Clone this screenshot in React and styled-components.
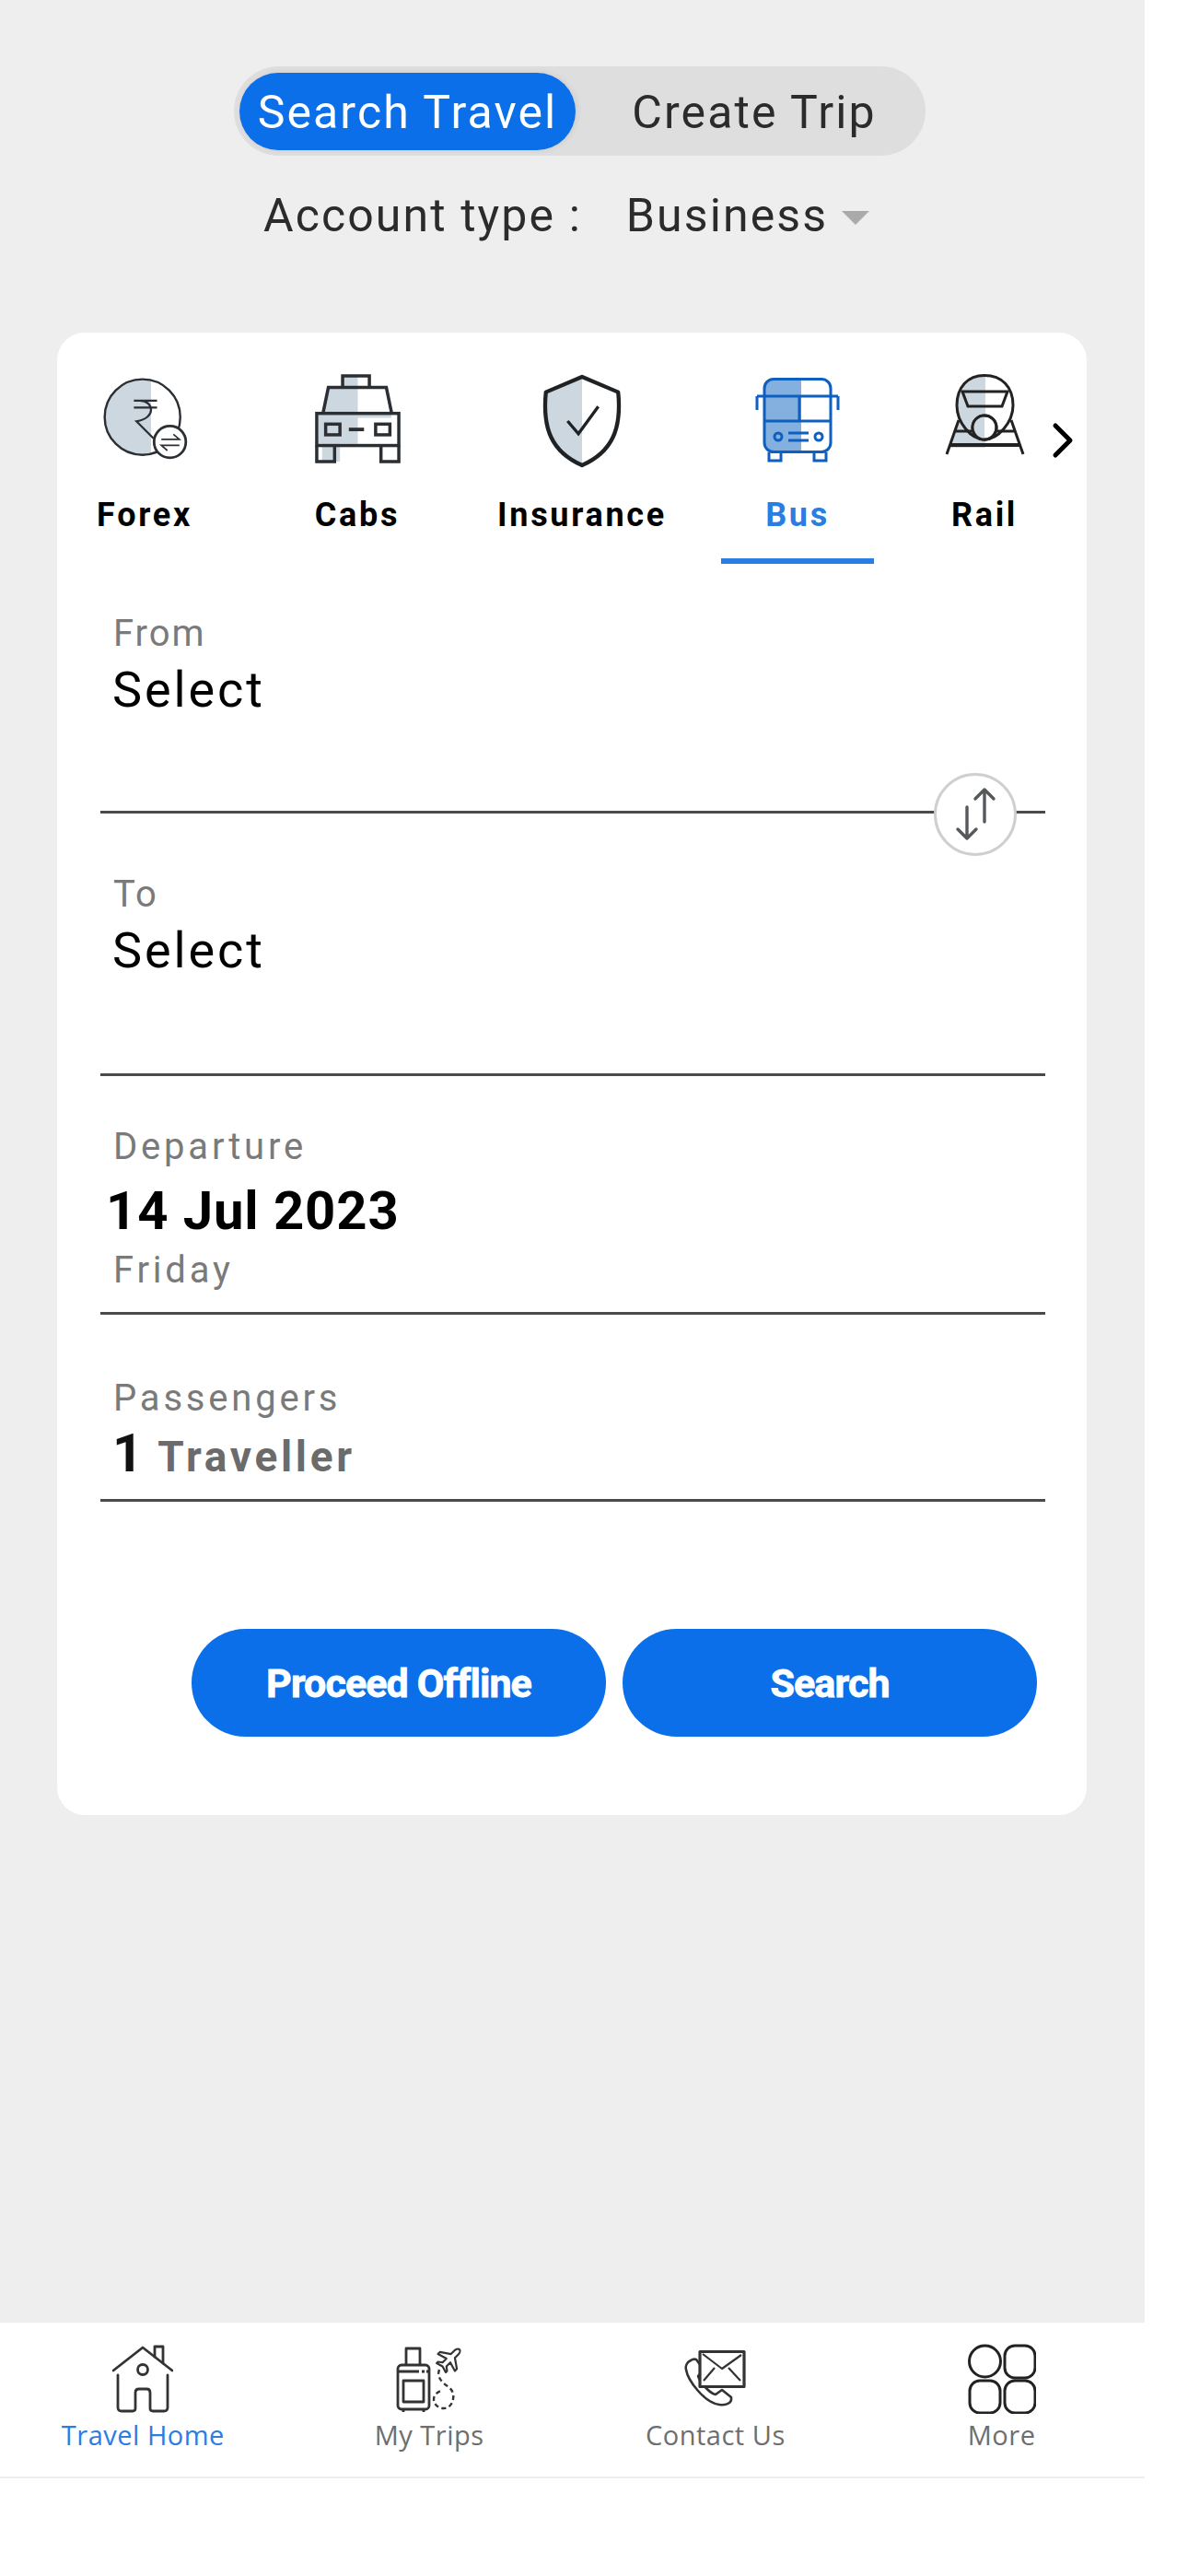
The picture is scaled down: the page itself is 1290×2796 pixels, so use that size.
import React from "react";
import styled, { createGlobalStyle } from "styled-components";

const Global = createGlobalStyle`
  html, body { margin: 0; padding: 0; background: #fff; }
  body { font-family: Roboto, "Liberation Sans", sans-serif; }
`;

const Page = styled.div`width: 1243px; height: 2796px; display: flex; flex-direction: column;`;
const Main = styled.main`height: 2521px; background: #eeeeee; padding: 72px 63px 0 62px; box-sizing: border-box; display: flex; flex-direction: column; align-items: center;`;
const Toggle = styled.div`
  width: 751px; height: 97px; margin-left: 17px; box-sizing: border-box; padding: 7px 6px; border-radius: 49px; background: #dedede;
  display: flex; align-items: center;
`;
const ToggleOption = styled.div`
  height: 84px; box-sizing: border-box; padding-top: 2px; border-radius: 42px; display: flex; align-items: center; justify-content: center; white-space: nowrap;
  width: ${p => p.$w}px; margin-left: ${p => p.$ml || 0}px;
  font-size: 50px; letter-spacing: 2.1px; font-weight: 400;
  background: ${p => p.$active ? "#0a6fe9" : "transparent"};
  color: ${p => p.$active ? "#fff" : "#2b2b2b"};
  box-shadow: ${p => p.$active ? "2px 0 6px rgba(0,0,0,.08)" : "none"};
`;
const AccountRow = styled.div`margin-top: 36px; height: 58px; display: flex; align-items: center; font-size: 50px; letter-spacing: 2.1px; color: #2b2b2b; margin-left: -12px;`;
const AccountValue = styled.span`margin-left: 48px;`;
const Caret = styled.span`width: 0; height: 0; margin-left: 15px; margin-top: 4px; border-left: 15px solid transparent; border-right: 15px solid transparent; border-top: 15px solid #aaa;`;

const Card = styled.section`
  margin-top: 98px; width: 1118px; height: 1609px; background: #fff; border-radius: 30px; box-sizing: border-box; padding: 45px 45px 0 47px; align-self: flex-start;
  display: flex; flex-direction: column;
`;
const Tabs = styled.nav`position: relative; display: flex; height: 202px; margin: 0 -45px 0 -47px;`;
const Tab = styled.div`
  position: absolute; left: ${p => p.$cx}px; top: 0; transform: translateX(-50%);
  display: flex; flex-direction: column; align-items: center; white-space: nowrap;
  width: ${p => p.$w}px; height: 200px;
  color: ${p => p.$active ? "#2a7de1" : "#000"};
  border-bottom: ${p => p.$active ? "6px solid #2a7de1" : "none"};
`;
const TabIcon = styled.div`height: 108px; display:flex; align-items:flex-start; justify-content:center;`;
const TabLabel = styled.div`margin-top: 23px; font-size: 36px; font-weight: 700; letter-spacing: 2.7px; line-height: 44px;`;
const Next = styled.div`position: absolute; left: 1079px; top: 52px;`;

const Field = styled.div`
  position: relative; height: ${p => p.$h}px; box-sizing: border-box; padding: ${p => p.$pt}px 14px 0; border-bottom: 3px solid #4a4a4a;
  display: flex; flex-direction: column;
`;
const Label = styled.div`font-size: 40px; line-height: 46px; letter-spacing: ${p => p.$wide ? 3.8 : 2}px; color: #7a7a7a;`;
const Select = styled.div`font-size: 54px; line-height: 62px; letter-spacing: 2.9px; color: #000; margin-top: 7px; margin-left: -1px;`;
const DateValue = styled.div`font-size: 58px; line-height: 68px; font-weight: 700; letter-spacing: 0.9px; color: #000; margin-left: -8px; margin-top: 12px;`;
const Sub = styled.div`font-size: 40px; line-height: 46px; letter-spacing: 3.8px; color: #7a7a7a; margin-top: 8px;`;
const Pax = styled.div`display:flex; align-items: baseline; margin-top: 3px;`;
const PaxNum = styled.span`font-size: 58px; line-height: 66px; font-weight: 700; color: #111; margin-left: -1px;`;
const PaxText = styled.span`font-size: 46px; font-weight: 700; letter-spacing: 3.7px; color: #6b6b6b; margin-left: 16px;`;
const Swap = styled.div`
  position: absolute; right: 31px; bottom: -49px; width: 90px; height: 90px; box-sizing: border-box; border: 3px solid #cfcfcf; border-radius: 50%; background: #fff;
  display:flex; align-items:center; justify-content:center; z-index: 1;
`;
const Actions = styled.div`display: flex; gap: 18px; justify-content: flex-end; padding-right: 9px; margin-top: 138px;`;
const Button = styled.button`
  width: 450px; height: 117px; border: 0; border-radius: 59px; background: #0a6fe9; color: #fff;
  font: 700 43px Roboto, sans-serif; letter-spacing: -0.9px; -webkit-text-stroke: 0.8px #fff;
`;

const Nav = styled.nav`height: 169px; box-sizing: border-box; border-bottom: 2px solid #eeeeee; background: #fff; display: grid; grid-template-columns: repeat(4, 1fr);`;
const NavItem = styled.div`display:flex; flex-direction:column; align-items:center; padding-top: 22px; color: ${p => p.$active ? "#2a7de1" : "#6e6e6e"};`;
const NavIcon = styled.div`height: 78px; display:flex; align-items:center; justify-content:center;`;
const NavLabel = styled.div`font-family: "Open Sans", "Noto Sans", sans-serif; font-size: 29px; line-height: 40px; margin-top: 2px; letter-spacing: .5px;`;

const S = "#2b2f33", F = "#cdd7e0";

const Forex = () => (
  <svg width="97" height="97" viewBox="0 0 104 104" fill="none" stroke={S} strokeWidth="2.6">
    <path d="M59 7.2A44 44 0 1 0 59 92.8z" fill={F} stroke="none" />
    <circle cx="49" cy="50" r="44" />
    <path d="M39 31h27M39 39h27M46 31c16 0 20 20 -4 24l20 20" strokeWidth="2.4" />
    <circle cx="81" cy="79" r="18.5" fill="#fff" strokeWidth="3" />
    <path d="M71 76h21l-7-6M92 83h-21l7 6" strokeWidth="1.8" />
  </svg>
);
const Cabs = () => (
  <svg width="93" height="97" viewBox="0 0 96 100" fill="none" stroke={S} strokeWidth="3.6">
    <path d="M31 2h30v13H31zM14 15h66l6 34H8z" fill={F} stroke="none" />
    <path d="M4 44h44v34H4zM8 78h20v20H8z" fill={F} stroke="none" />
    <path d="M48 2h13v13H48zM48 15h33l5 29H48z" fill="#fff" stroke="none" />
    <path d="M31 15V2h30v13M9 44l6-29h65l6 29" />
    <rect x="2" y="44" width="92" height="36" />
    <path d="M2 80v18h20V80M94 80v18H74V80" />
    <rect x="12" y="56" width="16" height="12" />
    <rect x="68" y="56" width="16" height="12" />
    <path d="M38 62h17" strokeWidth="4" />
  </svg>
);
const Shield = () => (
  <svg width="92" height="102" viewBox="0 0 92 104" fill="none" stroke="#1f2225" strokeWidth="4.4">
    <path d="M46 3 L6 22 C4 60 12 85 46 101z" fill={F} stroke="none" />
    <path d="M46 3 L6 20 C2 60 12 86 46 101 C80 86 90 60 86 20z" strokeLinejoin="round" />
    <path d="M30 52l12 14 22-30" strokeWidth="3.4" />
  </svg>
);
const BusIcon = () => (
  <svg width="92" height="96" viewBox="0 -4 92 96" fill="none" stroke="#0d5fc0" strokeWidth="3">
    <path d="M10 12q0-10 10-10h30v78H20q-10 0-10-10z" fill="#84b0e0" stroke="none" />
    <rect x="10" y="1.5" width="72" height="79" rx="10" />
    <path d="M2 20h88M2 20v15M90 20v15M48 20v27M10 47h72" />
    <circle cx="25" cy="64" r="4" />
    <circle cx="69" cy="64" r="4" />
    <path d="M36 60h22M36 68h22" />
    <path d="M15 81v9h13V81M64 81v9h13V81" />
  </svg>
);
const RailIcon = () => (
  <svg width="87" height="90" viewBox="0 0 87 90" fill="none" stroke="#222" strokeWidth="3">
    <path d="M44 1.5C25 1.5 13 14 13 34 13 40 14 46 15 50L4 80H44z" fill={F} stroke="none" />
    <path d="M43 1.5C25 1.5 13 14 13 34 13 52 28 71 43 71 58 71 74 52 74 34 74 14 62 1.5 43 1.5z" />
    <path d="M19 19h49l-6 16H25z" />
    <circle cx="43" cy="58" r="13" fill="#fff" />
    <path d="M30 58a13 13 0 0 1 13-13v26a13 13 0 0 1-13-13z" fill={F} stroke="none" />
    <circle cx="43" cy="58" r="13" />
    <path d="M15 50L2 87M72 50l13 37M11 62h18M57 62h18" />
    <path d="M6 77h75" strokeWidth="4" />
  </svg>
);
const Chevron = () => (
  <svg width="26" height="40" viewBox="0 0 26 40" fill="none" stroke="#000" strokeWidth="5" strokeLinecap="round" strokeLinejoin="round"><path d="M5 4l16 16L5 36" /></svg>
);
const SwapIcon = () => (
  <svg width="50" height="60" viewBox="0 0 50 60" fill="none" stroke="#55595c" strokeWidth="3.4" strokeLinecap="round" strokeLinejoin="round">
    <path d="M16 22v34M6 46l10 10 10-10" />
    <path d="M35 38V3M25 13L35 3l10 10" />
  </svg>
);
const HomeIcon = () => (
  <svg width="66" height="74" viewBox="0 0 66 74" fill="none" stroke="#333" strokeWidth="2.8" strokeLinejoin="round" strokeLinecap="round">
    <path d="M1 28L33 3l32 25" />
    <path d="M46 13V2h9v18" />
    <path d="M6 33V68q0 4 4 4h12q3 0 3-3V52q0-4 4-4h8q4 0 4 4v17q0 3 3 3h12q4 0 4-4V33" />
    <circle cx="33" cy="27" r="5.5" />
  </svg>
);
const TripsIcon = () => (
  <svg width="72" height="72" viewBox="0 0 72 72" fill="none" stroke="#333" strokeWidth="2.8" strokeLinejoin="round">
    <rect x="2" y="21" width="34" height="48" rx="4" />
    <path d="M11 21V3h15v18" />
    <rect x="8" y="38" width="22" height="23" />
    <path d="M3 28h22M28 28h3M33 28h3" />
    <path d="M8 69v3M30 69v3" />
    <g transform="translate(59 14) rotate(45)" strokeWidth="2.2">
      <path d="M0-14c2 0 3 3 3 5v5l10 7v3L3 3v6l4 3v2l-7-2-7 2v-2l4-3V3L-13 6V3l10-7v-5c0-2 1-5 3-5z" />
    </g>
    <path d="M47 26C44 34 50 40 56 44 62 48 63 54 62 58 61 64 57 68 52 68 46 68 41 64 41 58 41 54 45 50 49 49" strokeDasharray="5 3.5" strokeWidth="2.4" />
  </svg>
);
const ContactIcon = () => (
  <svg width="68" height="64" viewBox="0 0 68 64" fill="none" stroke="#333" strokeWidth="2.6" strokeLinejoin="round">
    <path d="M7 12C3 14 1 18 2 22 4 34 22 58 38 60 44 61 50 59 51 55V52L41 44 34 49C28 48 17 36 15 29L21 22 13 11Q10 10 7 12z" />
    <rect x="17" y="2.5" width="48" height="38" fill="#fff" strokeWidth="3.2" />
    <path d="M20 5L41 21 62 6M21 34L33 20M61 34L48 20" strokeWidth="2.2" />
  </svg>
);
const MoreIcon = () => (
  <svg width="74" height="76" viewBox="0 0 74 76" fill="none" stroke="#222" strokeWidth="3">
    <circle cx="18.5" cy="19" r="17" />
    <rect x="40" y="2" width="33" height="35" rx="11" />
    <rect x="2" y="40" width="33" height="35" rx="11" />
    <rect x="40" y="40" width="33" height="35" rx="11" />
  </svg>
);

const tabs = [
  ["Forex", Forex, 157, 130],
  ["Cabs", Cabs, 388, 130],
  ["Insurance", Shield, 632, 220],
  ["Bus", BusIcon, 866, 166],
  ["Rail", RailIcon, 1069, 130],
];

export default function App() {
  return (
    <Page>
      <Global />
      <Main>
        <Toggle>
          <ToggleOption $active $w={365}>Search Travel</ToggleOption>
          <ToggleOption $w={360} $ml={14}>Create Trip</ToggleOption>
        </Toggle>
        <AccountRow>Account type :<AccountValue>Business</AccountValue><Caret /></AccountRow>
        <Card>
          <Tabs>
            {tabs.map(([name, I, cx, w]) => (
              <Tab key={name} $cx={cx - 62} $w={w} $active={name === "Bus"}>
                <TabIcon><I /></TabIcon>
                <TabLabel>{name}</TabLabel>
              </Tab>
            ))}
            <Next><Chevron /></Next>
          </Tabs>
          <Field $h={275} $pt={57}>
            <Label>From</Label>
            <Select>Select</Select>
            <Swap><SwapIcon /></Swap>
          </Field>
          <Field $h={285} $pt={65}>
            <Label>To</Label>
            <Select>Select</Select>
          </Field>
          <Field $h={259} $pt={54}>
            <Label $wide>Departure</Label>
            <DateValue>14 Jul 2023</DateValue>
            <Sub>Friday</Sub>
          </Field>
          <Field $h={203} $pt={68}>
            <Label $wide>Passengers</Label>
            <Pax><PaxNum>1</PaxNum><PaxText>Traveller</PaxText></Pax>
          </Field>
          <Actions>
            <Button>Proceed Offline</Button>
            <Button>Search</Button>
          </Actions>
        </Card>
      </Main>
      <Nav>
        <NavItem $active><NavIcon><HomeIcon /></NavIcon><NavLabel>Travel Home</NavLabel></NavItem>
        <NavItem><NavIcon><TripsIcon /></NavIcon><NavLabel>My Trips</NavLabel></NavItem>
        <NavItem><NavIcon><ContactIcon /></NavIcon><NavLabel>Contact Us</NavLabel></NavItem>
        <NavItem><NavIcon><MoreIcon /></NavIcon><NavLabel>More</NavLabel></NavItem>
      </Nav>
    </Page>
  );
}
